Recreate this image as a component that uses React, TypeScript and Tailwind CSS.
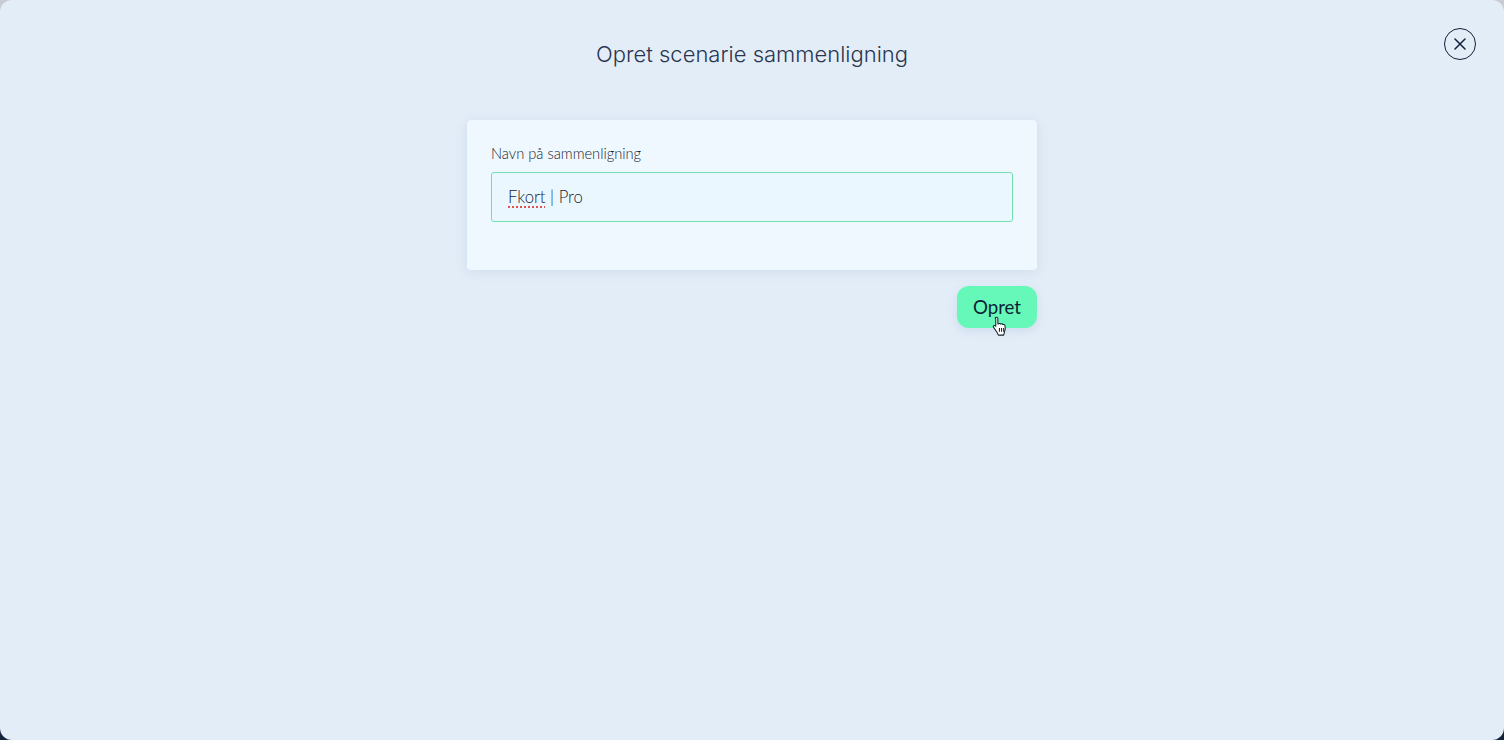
const lato = { fontFamily: "Lato, sans-serif" };

function Cursor() {
  return (
    <svg className="absolute left-[35px] top-[30px]" width="17" height="21" viewBox="0 0 16 20" aria-hidden="true">
      <path
        d="M4 1.2c.9 0 1.5.6 1.5 1.5v5l.4-.1c.3-.7 1.700-.7 2.100.1.5-.5 1.700-.4 2 .4.6-.4 1.900-.2 2.200.9.6 2.400.5 4.600-.5 6.500l-.7 2.700H6l-1.500-3L1.400 10.800c-.6-1-.1-1.800.7-1.800.5 0 1 .3 1.400.8V2.700C2.500 1.800 3.100 1.200 4 1.200z"
        fill="#fff"
        stroke="#16202c"
        strokeWidth="1"
        strokeLinejoin="round"
      />
      <path d="M7 11.500v3.500M9 11.500v3.500M11 11.500v3.500" stroke="#16202c" strokeWidth="1" />
    </svg>
  );
}

export default function App() {
  return (
    <div className="h-[740px] w-full overflow-hidden bg-gradient-to-b from-[#c9ccd2] to-[#14243c]">
      <div className="relative flex h-full flex-col items-center rounded-[12px] bg-[#e3edf8] text-[#2a3650]">
        <h1
          className="mt-[40px] text-[22px] leading-[28px] font-light text-[#2a3650]"
          style={{ fontFamily: "Inter, sans-serif" }}
        >
          Opret scenarie sammenligning
        </h1>

        <button className="absolute right-[28px] top-[28px] flex h-[32px] w-[32px] items-center justify-center rounded-full border-[1.5px] border-[#14203a]">
          <svg width="12" height="12" viewBox="0 0 12 12" aria-hidden="true">
            <path d="M1 1l10 10M11 1L1 11" stroke="#14203a" strokeWidth="1.500" strokeLinecap="round" />
          </svg>
        </button>

        <div className="mt-[52px] flex w-[570px] flex-col">
          <div
            className="h-[150px] rounded-[4px] bg-[#eff8ff] px-[24px] pt-[24px] shadow-[0_2px_12px_rgba(120,150,190,0.18)]"
            style={lato}
          >
            <label className="block text-[14.7px] leading-[18px] font-light text-[#141e34]">Navn på sammenligning</label>
            <div className="mt-[10px] flex h-[50px] items-center rounded-[3px] border border-[#6fe0ae] bg-[#ebf7ff] px-[16px] pt-[2px] text-[16.7px] font-light text-[#141e34]">
              <span className="underline decoration-[#e0524f] decoration-dotted decoration-[1.5px] underline-offset-[3px]">Fkort</span>
              <span className="whitespace-pre"> | Pro</span>
            </div>
          </div>

          <div className="mt-[16px] flex justify-end">
            <button
              className="relative h-[42px] w-[80px] rounded-[12px] bg-[#66f8b9] text-[18.7px] leading-[42px] text-[#0c1f33] shadow-[0_3px_10px_rgba(120,150,190,0.2)]"
              style={lato}
            >
              Opret
              <Cursor />
            </button>
          </div>
        </div>
      </div>
    </div>
  );
}
